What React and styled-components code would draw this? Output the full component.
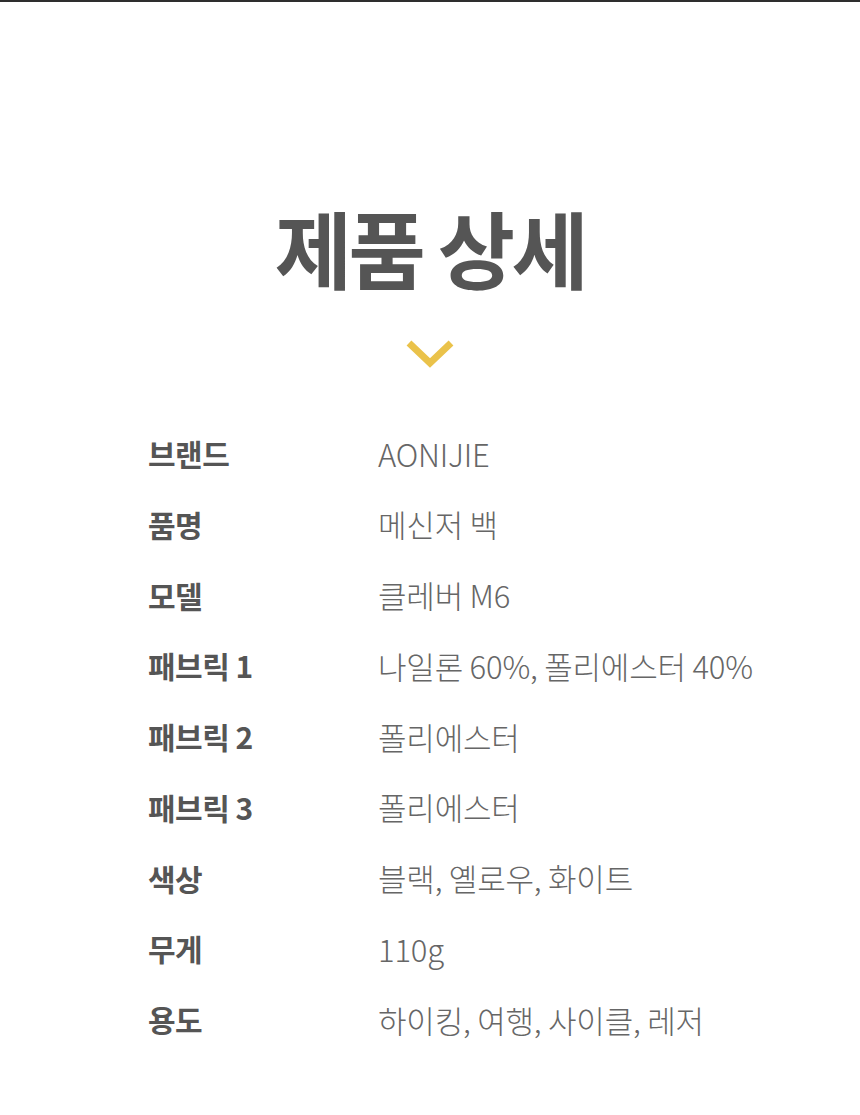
import React from "react";
import styled, { createGlobalStyle } from "styled-components";

const GlobalStyle = createGlobalStyle`
  html, body {
    margin: 0;
    padding: 0;
    background: #fff;
  }
  body {
    font-family: "Noto Sans CJK KR", "Noto Sans", sans-serif;
  }
`;

const specs = [
  ["브랜드", "AONIJIE"],
  ["품명", "메신저 백"],
  ["모델", "클레버 M6"],
  ["패브릭 1", "나일론 60%, 폴리에스터 40%"],
  ["패브릭 2", "폴리에스터"],
  ["패브릭 3", "폴리에스터"],
  ["색상", "블랙, 옐로우, 화이트"],
  ["무게", "110g"],
  ["용도", "하이킹, 여행, 사이클, 레저"],
];

const App = () => {
  return (
    <>
      <GlobalStyle />
      <Page>
        <Title>제품 상세</Title>
        <Chevron viewBox="0 0 48 28">
          <polyline points="3,3 24,23 45,3" />
        </Chevron>
        <SpecList>
          {specs.map(([label, value]) => (
            <SpecRow key={label}>
              <Label>{label}</Label>
              <Value>{value}</Value>
            </SpecRow>
          ))}
        </SpecList>
      </Page>
    </>
  );
};

export default App;

const Page = styled.div`
  border-top: 2px solid #2e2e2e;
  height: 1113px;
  display: flex;
  flex-direction: column;
  align-items: center;
  padding-top: 195px;
  box-sizing: border-box;
`;

const Title = styled.h1`
  margin: 0;
  font-size: 84px;
  font-weight: 700;
  line-height: 1.2;
  letter-spacing: -3.5px;
  color: #555;
`;

const Chevron = styled.svg`
  width: 48px;
  height: 28px;
  margin-top: 42px;
  fill: none;
  stroke: #eac24a;
  stroke-width: 7;
  stroke-linecap: butt;
  stroke-linejoin: miter;
`;

const SpecList = styled.div`
  align-self: stretch;
  display: flex;
  flex-direction: column;
  padding: 50px 0 0 148px;
`;

const SpecRow = styled.div`
  display: grid;
  grid-template-columns: 230px 1fr;
  align-items: center;
  height: 70.75px;
`;

const Label = styled.div`
  font-size: 30px;
  font-weight: 700;
  letter-spacing: -0.5px;
  color: #555;
`;

const Value = styled.div`
  font-size: 31px;
  font-weight: 300;
  letter-spacing: -0.2px;
  color: #666;
`;
